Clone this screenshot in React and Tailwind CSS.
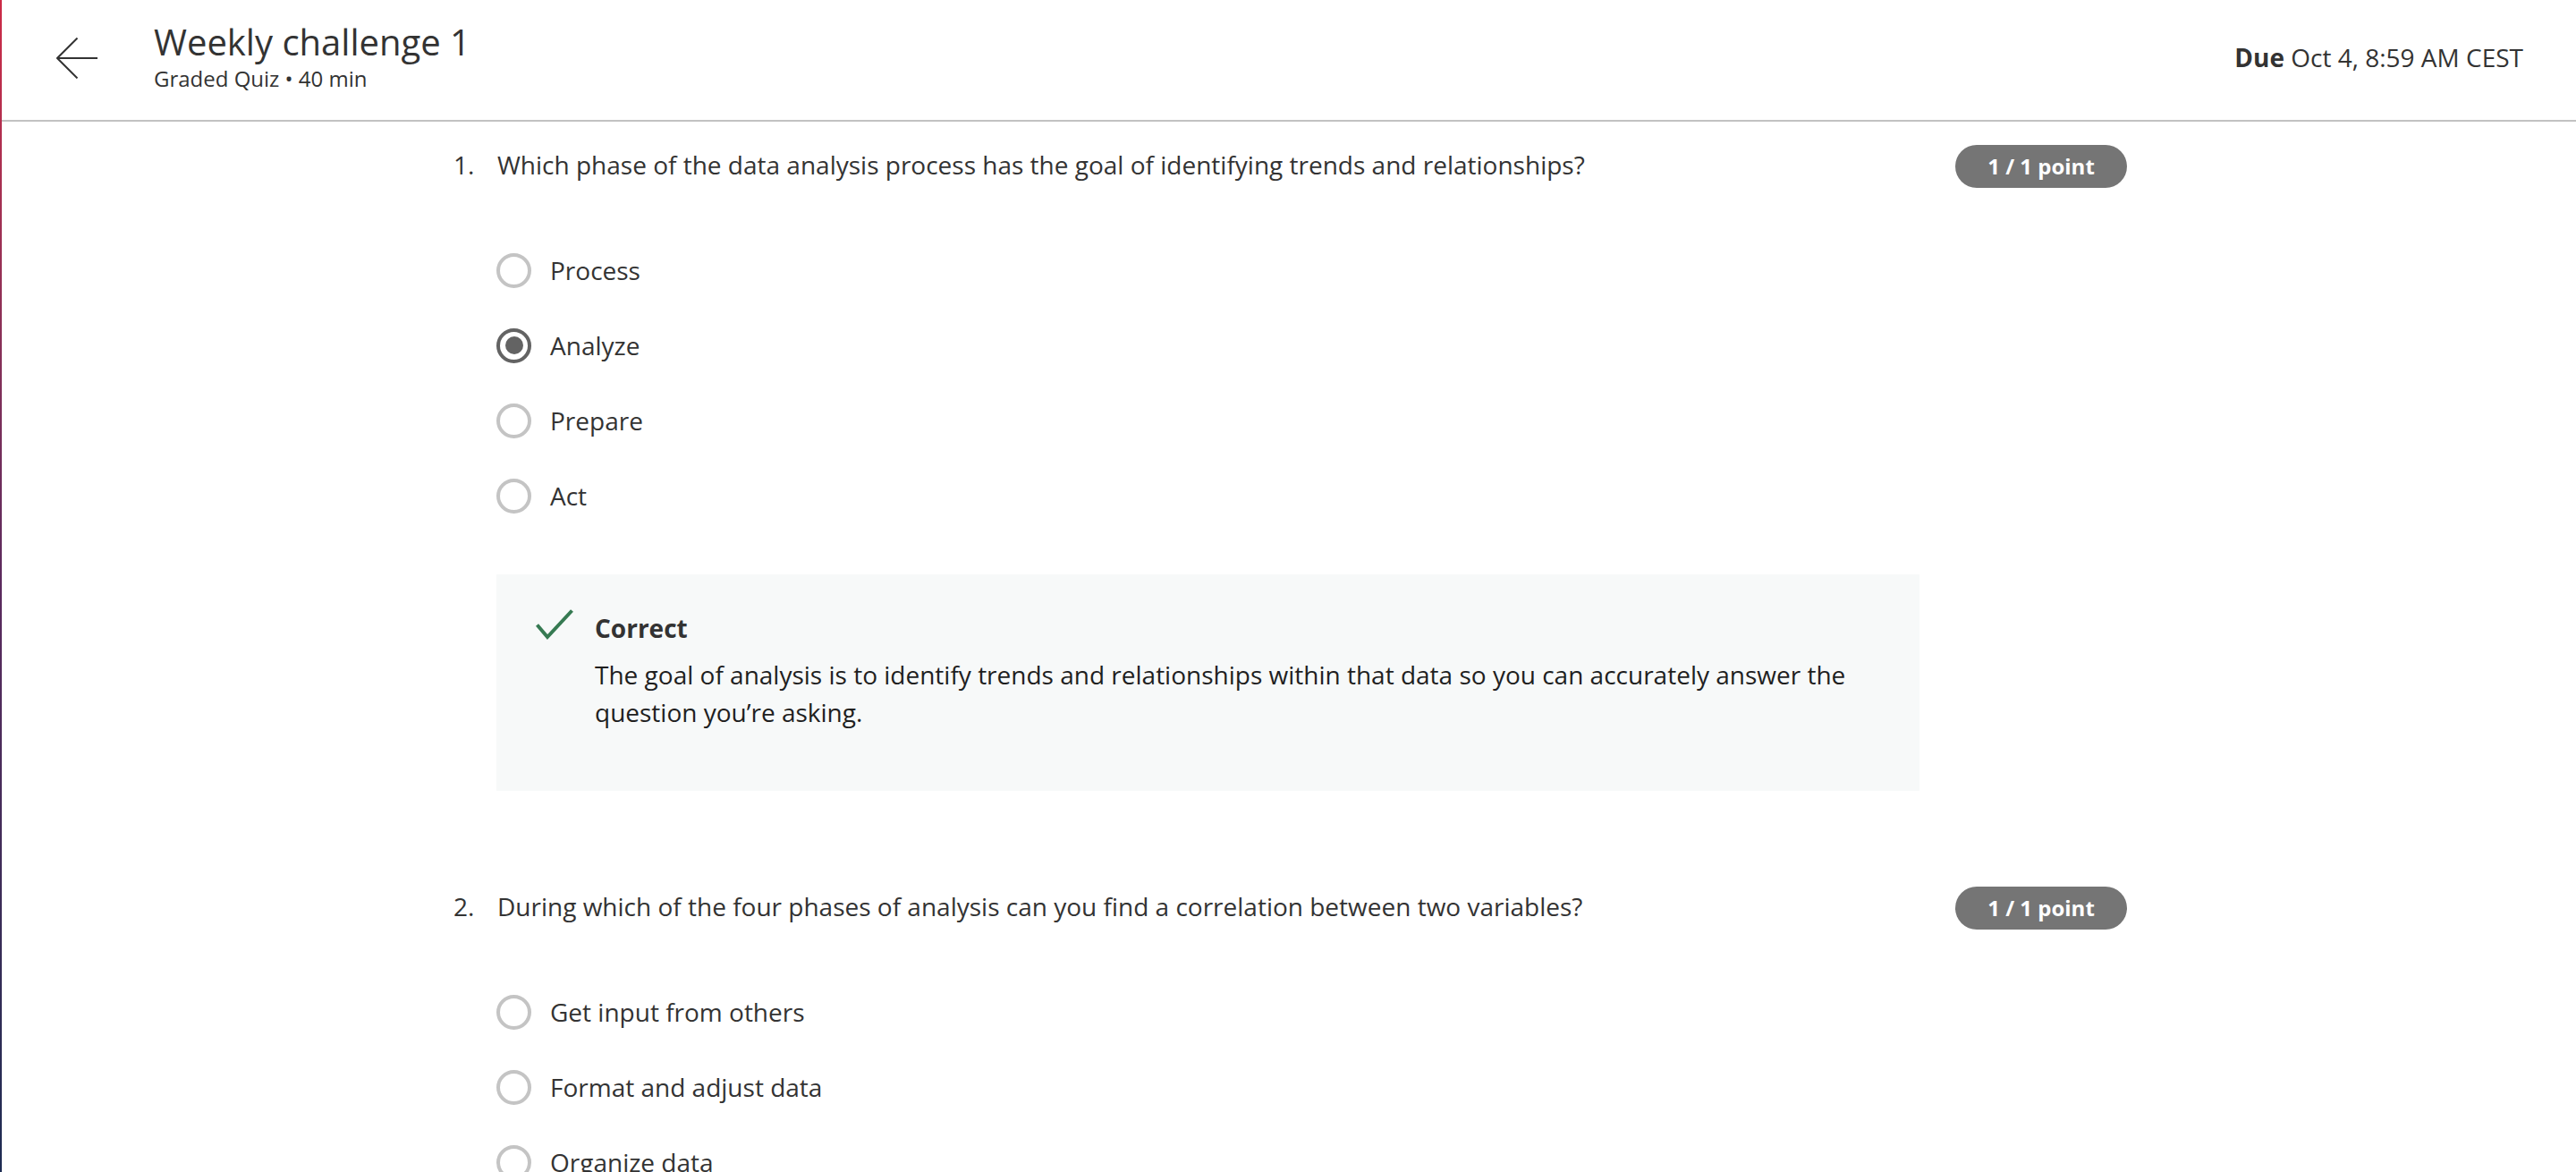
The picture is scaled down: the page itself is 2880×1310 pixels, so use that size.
import React from 'react'

const questions = [
  {
    id: 1,
    text: 'Which phase of the data analysis process has the goal of identifying trends and relationships?',
    options: ['Process', 'Analyze', 'Prepare', 'Act'],
    selected: 1,
    feedback:
      'The goal of analysis is to identify trends and relationships within that data so you can accurately answer the question you’re asking.',
  },
  {
    id: 2,
    text: 'During which of the four phases of analysis can you find a correlation between two variables?',
    options: ['Get input from others', 'Format and adjust data', 'Organize data', 'Transform data'],
    selected: 3,
    feedback: null,
  },
]

const Radio = ({ checked }) =>
  checked ? (
    <span className="flex h-[39px] w-[39px] shrink-0 items-center justify-center rounded-full border-[4px] border-[#636363]">
      <span className="h-[20px] w-[20px] rounded-full bg-[#636363]" />
    </span>
  ) : (
    <span className="h-[39px] w-[39px] shrink-0 rounded-full border-[4px] border-[#c4c4c4]" />
  )

const Question = ({ q, first }) => (
  <div className={first ? '' : 'mt-[108px]'}>
    {/* question line + score pill */}
    <div className="flex items-start">
      <div className="w-[49px] shrink-0 text-[28px] leading-[42px] text-[#333]">{q.id}.</div>
      <div className="w-[1590px] shrink-0 text-[28px] leading-[42px] text-[#333]">{q.text}</div>
      <div className="ml-[40px] -mt-px flex h-[48px] w-[192px] items-center justify-center rounded-full bg-[#757575] text-[24px] font-bold text-white">
        1 / 1 point
      </div>
    </div>

    {/* answers */}
    <div className="ml-[48px] mt-[71px] flex flex-col gap-[42px]">
      {q.options.map((opt, i) => (
        <div key={opt} className="flex h-[42px] items-center gap-[21px]">
          <Radio checked={i === q.selected} />
          <span className="text-[28px] leading-[42px] text-[#333]">{opt}</span>
        </div>
      ))}
    </div>

    {q.feedback && (
      <div className="ml-[48px] mt-[67px] flex w-[1591px] bg-[#f7f9f9] pb-[67px] pl-[44px] pr-[44px] pt-[39px]">
        <svg className="h-[34px] w-[42px] shrink-0" viewBox="0 0 42 34" fill="none">
          <path d="M1.5 17.5 L13 31 L40.5 1.5" stroke="#367a52" strokeWidth="4" />
        </svg>
        <div className="ml-[24px]">
          <div className="text-[28px] font-bold leading-[42px] text-[#333]">Correct</div>
          <p className="mt-[10px] text-[28px] leading-[42px] text-[#1f1f1f]">{q.feedback}</p>
        </div>
      </div>
    )}
  </div>
)

export default function App() {
  return (
    <div className="flex h-screen overflow-hidden bg-white font-['Open_Sans',sans-serif]">
      {/* brand strip on the left */}
      <div className="w-[2px] shrink-0 bg-gradient-to-b from-[#cc2a46] via-[#5b2a5e] to-[#1d2b52]" />

      <div className="flex-1">
        {/* header */}
        <header className="flex h-[136px] items-start border-b-2 border-[#c2c2c2]">
          <button className="ml-[61px] mt-[42px] h-[46px] w-[46px] text-[#333]" title="Back">
            <svg viewBox="0 0 46 46" className="h-[46px] w-[46px]" fill="none" stroke="currentColor" strokeWidth="2">
              <path d="M1 23 H46 M23.5 0.5 L1 23 L23.5 45.5" />
            </svg>
          </button>
          <div className="ml-[63px] mt-[22px]">
            <h1 className="text-[40px] leading-[50px] text-[#333]">Weekly challenge 1</h1>
            <p className="text-[24px] leading-[32px] text-[#333]">Graded Quiz • 40 min</p>
          </div>
          <div className="ml-auto mr-[59px] mt-[43px] text-[28px] leading-[42px] text-[#333]">
            <span className="font-bold">Due</span> Oct 4, 8:59 AM CEST
          </div>
        </header>

        {/* quiz body */}
        <main className="pl-[505px] pt-[27px]">
          {questions.map((q, i) => (
            <Question key={q.id} q={q} first={i === 0} />
          ))}
        </main>
      </div>
    </div>
  )
}
